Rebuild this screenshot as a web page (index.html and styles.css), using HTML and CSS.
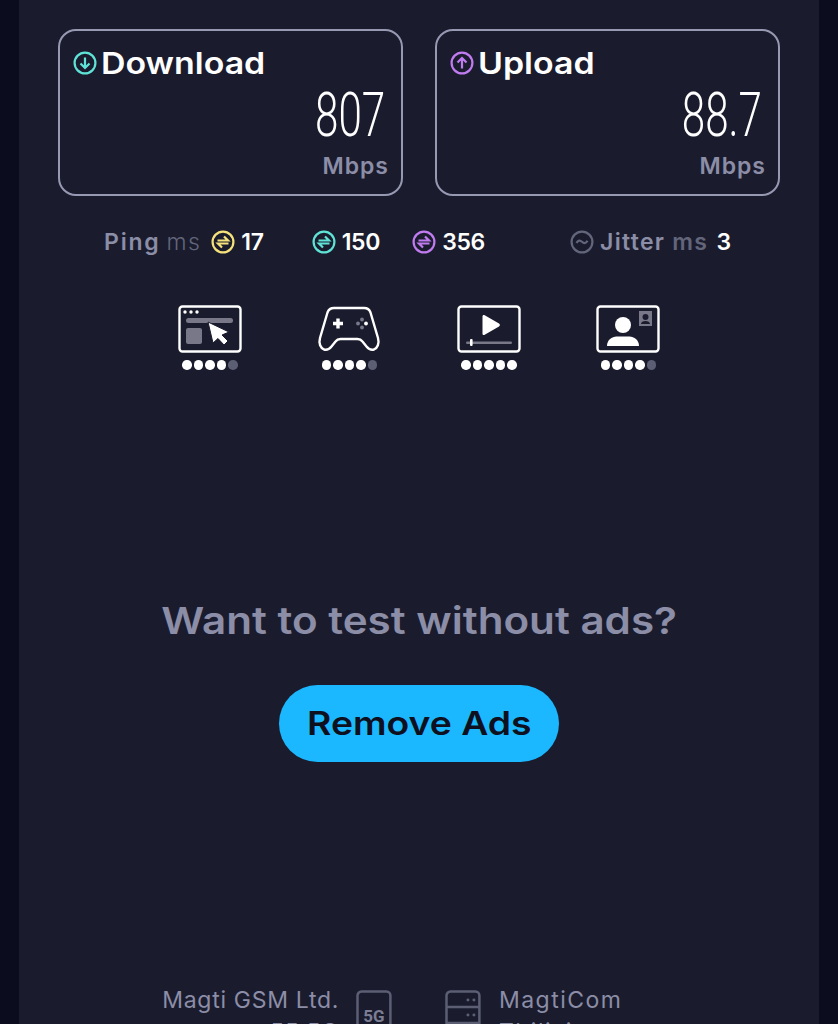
FILE: index.html
```html
<!DOCTYPE html>
<html lang="en">
<head>
  <meta charset="UTF-8">
  <link rel="stylesheet" href="styles.css">
  <title>Speed Test Results</title>
</head>
<body>
  <div class="panel">
    <div class="cards">
      <div class="card">
        <div class="card-title">
          <svg class="card-icon" viewBox="0 0 24 24"><circle cx="12" cy="12" r="10.4" stroke="#5fe3d6"/><path d="M12 6.5v10.5M7.5 12.5l4.5 4.5 4.5-4.5" stroke="#5fe3d6"/></svg>
          <span class="wide-left">Download</span>
        </div>
        <div class="card-value"><span>807</span></div>
        <div class="card-unit">Mbps</div>
      </div>
      <div class="card">
        <div class="card-title">
          <svg class="card-icon" viewBox="0 0 24 24"><circle cx="12" cy="12" r="10.4" stroke="#c07bf0"/><path d="M12 17.5V7M7.5 11.5L12 7l4.5 4.5" stroke="#c07bf0"/></svg>
          <span class="wide-left">Upload</span>
        </div>
        <div class="card-value"><span>88.7</span></div>
        <div class="card-unit">Mbps</div>
      </div>
    </div>

    <div class="stats">
      <span class="stat-label ping-label">Ping</span>
      <span class="stat-ms">ms</span>
      <svg class="stat-icon icon-ping" viewBox="0 0 24 24"><circle cx="12" cy="12" r="10.4" stroke="#f5e27a"/><path d="M6.5 10.500H17l-4-4M17.500 13.500H7l4 4" stroke="#f5e27a"/></svg>
      <span class="stat-num">17</span>
      <svg class="stat-icon icon-down" viewBox="0 0 24 24"><circle cx="12" cy="12" r="10.4" stroke="#5fe3d6"/><path d="M6.500 10.500H17l-4-4M17.500 13.500H7l4 4" stroke="#5fe3d6"/></svg>
      <span class="stat-num">150</span>
      <svg class="stat-icon icon-up" viewBox="0 0 24 24"><circle cx="12" cy="12" r="10.400" stroke="#c07bf0"/><path d="M6.500 10.500H17l-4-4M17.500 13.500H7l4 4" stroke="#c07bf0"/></svg>
      <span class="stat-num">356</span>
      <svg class="stat-icon icon-jitter" viewBox="0 0 24 24"><circle cx="12" cy="12" r="10.400" stroke="#63657a"/><path d="M6.500 13c1.500-3 3.500-3 5.500-1.200s3.800 1.800 5.500-1" stroke="#63657a"/></svg>
      <span class="stat-label jitter-label">Jitter</span>
      <span class="stat-ms jitter-ms">ms</span>
      <span class="stat-num jitter-num">3</span>
    </div>

    <div class="quality">
      <div class="quality-item">
        <svg class="quality-icon" viewBox="0 0 64 48">
          <rect x="1.500" y="1.500" width="61" height="45" rx="3" stroke="#fff" stroke-width="2.400"/>
          <circle cx="7" cy="7" r="1.700" fill="#fff"/><circle cx="13" cy="7" r="1.700" fill="#fff"/><circle cx="19" cy="7" r="1.700" fill="#fff"/>
          <rect x="8" y="13" width="47" height="5" rx="2.500" fill="#787888"/>
          <rect x="8" y="23" width="16" height="16" rx="2" fill="#787888"/>
          <path d="M30 17l21 10-7 3 6 6-4 4-6-6.500-5 4.500z" fill="#fff" stroke="#1a1c2e" stroke-width="1"/>
        </svg>
        <div class="dots"><i></i><i></i><i></i><i></i><i class="off"></i></div>
      </div>
      <div class="quality-item">
        <svg class="quality-icon" viewBox="0 0 64 48">
          <path d="M17 3h30c3.500 0 5.500 1.500 6.500 4.500L61 33c1.500 5.500-.5 10-4 11.500-3 1-5 0-7.500-3l-4-5c-1.500-2-3-2.500-5-2.500H23.500c-2 0-3.500.5-5 2.500l-4 5c-2.500 3-4.500 4-7.500 3-3.500-1.500-5.500-6-4-11.500l7.500-25.500C11.500 4.500 13.500 3 17 3z" stroke="#fff" stroke-width="2.400"/>
          <path d="M21 13.500v10M16 18.500h10" stroke="#fff" stroke-width="3.400"/>
          <circle cx="45" cy="14.500" r="1.900" fill="#787888"/><circle cx="45" cy="22.500" r="1.900" fill="#787888"/><circle cx="41" cy="18.500" r="1.900" fill="#787888"/><circle cx="49" cy="18.500" r="1.900" fill="#fff"/>
        </svg>
        <div class="dots"><i></i><i></i><i></i><i></i><i class="off"></i></div>
      </div>
      <div class="quality-item">
        <svg class="quality-icon" viewBox="0 0 64 48">
          <rect x="1.500" y="1.500" width="61" height="45" rx="3" stroke="#fff" stroke-width="2.400"/>
          <path d="M25.500 11.500c0-1.500 1-2 2.200-1.300L42 18.500c1.200.7 1.200 2.300 0 3l-14.300 8.300c-1.200.7-2.200.2-2.200-1.300z" fill="#fff"/>
          <rect x="9" y="36.500" width="46" height="2.400" rx="1.200" fill="#787888"/>
          <rect x="13" y="34" width="2.600" height="7" rx="1" fill="#fff"/>
        </svg>
        <div class="dots"><i></i><i></i><i></i><i></i><i></i></div>
      </div>
      <div class="quality-item">
        <svg class="quality-icon" viewBox="0 0 64 48">
          <rect x="1.500" y="1.500" width="61" height="45" rx="3" stroke="#fff" stroke-width="2.400"/>
          <circle cx="27" cy="20" r="8" fill="#fff"/>
          <path d="M11 41c0-6 5-9.500 9.500-9.500h13c4.500 0 9.500 3.500 9.500 9.500z" fill="#fff"/>
          <rect x="43" y="6" width="13" height="15" fill="#787888"/>
          <circle cx="49.500" cy="12" r="3" fill="#1a1c2e"/>
          <path d="M45 19c0-2 2-3 4.500-3s4.500 1 4.500 3z" fill="#1a1c2e"/>
        </svg>
        <div class="dots"><i></i><i></i><i></i><i></i><i class="off"></i></div>
      </div>
    </div>

    <div class="promo">
      <h2 class="promo-text"><span class="wide-center">Want to test without ads?</span></h2>
      <button class="remove-ads"><span class="wide-center">Remove Ads</span></button>
    </div>

    <div class="servers">
      <div class="server-name align-right">Magti GSM Ltd.<br>55 5G</div>
      <svg class="badge-5g" viewBox="0 0 36 60"><rect x="1.500" y="1.500" width="33" height="57" rx="4" stroke="#5c5e74" stroke-width="2.500"/><text x="18" y="32" text-anchor="middle" class="badge-text">5G</text></svg>
      <svg class="server-icon" viewBox="0 0 36 60"><rect x="1.500" y="1.500" width="33" height="57" rx="4" stroke="#5c5e74" stroke-width="2.500"/><path d="M2 17h32M2 33h32" stroke="#5c5e74" stroke-width="2.500"/><g fill="#5c5e74"><circle cx="23" cy="10" r="1.500"/><circle cx="29" cy="10" r="1.500"/><circle cx="23" cy="25" r="1.500"/><circle cx="29" cy="25" r="1.500"/></g></svg>
      <div class="server-name server-right">MagtiCom<br>Tbilisi</div>
    </div>
  </div>
</body>
</html>
```

FILE: styles.css
```css
html, body {
  margin: 0;
  height: 1024px;
  overflow: hidden;
}

body {
  background-color: #0b0c1e;
  font-family: 'Inter', sans-serif;
}

svg {
  fill: none;
  stroke-width: 2.2;
}

/* Inter is narrower than the reference face, so headings get stretched */
.wide-left,
.wide-center {
  display: inline-block;
  transform: scaleX(1.13);
}

.wide-left {
  transform-origin: left center;
}

.panel {
  box-sizing: border-box;
  width: 800px;
  height: 1024px;
  overflow: hidden;
  margin-left: 19px;
  padding: 29px 39px 0;
  background-color: #1a1c2e;
}

.cards {
  display: flex;
  gap: 32px;
}

.card {
  box-sizing: border-box;
  width: 345px;
  height: 167px;
  padding: 16px 14px 0 13px;
  border: 2px solid #9798b2;
  border-radius: 18px;
  color: #fff;
}

.card-title {
  display: flex;
  align-items: center;
  gap: 4px;
  height: 32px;
  font-size: 30px;
  font-weight: 600;
}

.card-icon {
  width: 24px;
  height: 24px;
  flex-shrink: 0;
}

.card-value {
  margin-top: 7px;
  height: 58px;
  padding-right: 2px;
  text-align: right;
  font-family: 'Roboto', sans-serif;
  font-size: 62px;
  font-weight: 300;
  line-height: 58px;
}

.card-value span {
  display: inline-block;
  transform: scaleX(0.68);
  transform-origin: right center;
}

.card-unit {
  margin-top: 8px;
  margin-right: -2px;
  text-align: right;
  font-size: 23px;
  font-weight: 600;
  letter-spacing: 1px;
  color: #8c8da6;
}

.stats {
  display: flex;
  align-items: center;
  height: 30px;
  margin-top: 31px;
  padding-left: 46px;
  font-size: 23px;
}

.stat-label {
  font-weight: 600;
  letter-spacing: 1.300px;
  color: #8c8da6;
}

.stat-ms {
  margin-left: 6px;
  font-weight: 300;
  letter-spacing: 1.400px;
  color: #63657a;
}

.stat-num {
  margin-left: 6px;
  font-weight: 600;
  letter-spacing: -0.300px;
  color: #fff;
}

.stat-icon {
  width: 24px;
  height: 24px;
  flex-shrink: 0;
}

.ping-label { letter-spacing: 1.800px; }
.icon-ping { margin-left: 10px; }
.icon-down { margin-left: 48px; }
.icon-up { margin-left: 32px; }
.icon-jitter { margin-left: 85px; }
.jitter-label { margin-left: 6px; }
.jitter-ms { margin-left: 7px; font-weight: 600; }
.jitter-num { margin-left: 8px; }

.quality {
  display: flex;
  margin-top: 48px;
  padding-left: 82px;
}

.quality-item {
  display: flex;
  flex-direction: column;
  align-items: center;
  width: 139.500px;
}

.quality-icon {
  width: 64px;
  height: 48px;
}

.dots {
  display: flex;
  gap: 2px;
  margin-top: 7px;
}

.dots i {
  width: 9.500px;
  height: 9.500px;
  border-radius: 50%;
  background-color: #fff;
}

.dots i.off {
  background-color: #5c5e74;
}

.promo {
  display: flex;
  flex-direction: column;
  align-items: center;
  margin-top: 228px;
}

.promo-text {
  margin: 0;
  font-size: 37.300px;
  line-height: 46px;
  font-weight: 600;
  color: #8c8da6;
}

.remove-ads {
  width: 280px;
  height: 77px;
  margin-top: 41px;
  border: none;
  border-radius: 39px;
  background-color: #1bb8ff;
  color: #0e1020;
  font-family: 'Inter', sans-serif;
  font-size: 33px;
  font-weight: 600;
}

.servers {
  display: flex;
  align-items: flex-start;
  margin-top: 222px;
  font-size: 23px;
  line-height: 32px;
  letter-spacing: 0.700px;
  color: #8c8da6;
}

.server-name {
  width: 282px;
  font-weight: 400;
}

.server-right {
  letter-spacing: 1.500px;
}

.align-right {
  text-align: right;
}

.badge-5g {
  width: 36px;
  height: 60px;
  margin-left: 17px;
  margin-top: 6px;
}

.badge-text {
  fill: #7c7e94;
  stroke: none;
  font-family: 'Roboto', sans-serif;
  font-size: 17px;
  font-weight: 700;
  letter-spacing: 0;
}

.server-icon {
  width: 36px;
  height: 60px;
  margin-left: 53px;
  margin-right: 18px;
  margin-top: 6px;
}
```
